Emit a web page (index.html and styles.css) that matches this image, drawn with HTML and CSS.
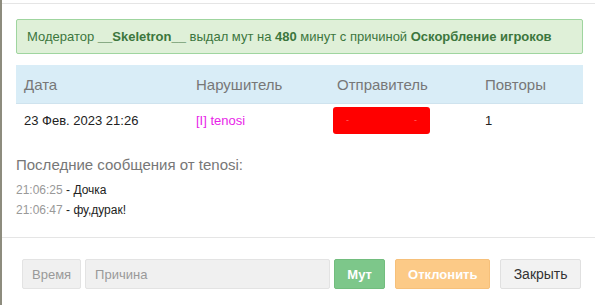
FILE: index.html
```html
<!DOCTYPE html>
<html lang="ru">
<head>
    <meta charset="UTF-8">
    <title>Мут</title>
    <link rel="stylesheet" href="styles.css">
</head>
<body>
    <div class="modal">
        <div class="modal-header"></div>
        <div class="modal-body">
            <div class="alert">
                Модератор <b>__Skeletron__</b> выдал мут на <b>480</b> минут с причиной <b>Оскорбление игроков</b>
            </div>

            <table class="report-table">
                <thead>
                    <tr>
                        <th class="col-date">Дата</th>
                        <th class="col-user">Нарушитель</th>
                        <th class="col-sender">Отправитель</th>
                        <th class="col-count">Повторы</th>
                    </tr>
                </thead>
                <tbody>
                    <tr>
                        <td>23 Фев. 2023 21:26</td>
                        <td><span class="nick">[I] tenosi</span></td>
                        <td><span class="hidden-name">-<span class="dash">-</span></span></td>
                        <td>1</td>
                    </tr>
                </tbody>
            </table>

            <h4 class="messages-title">Последние сообщения от tenosi:</h4>
            <div class="messages">
                <div class="message"><span class="time">21:06:25</span> - Дочка</div>
                <div class="message"><span class="time">21:06:47</span> - фу,дурак!</div>
            </div>
        </div>
        <div class="modal-footer">
            <span class="time-box">Время</span>
            <input type="text" class="reason-input" placeholder="Причина">
            <button class="btn btn-mute">Мут</button>
            <button class="btn btn-reject">Отклонить</button>
            <button class="btn btn-close">Закрыть</button>
        </div>
    </div>
</body>
</html>
```

FILE: styles.css
```css
body {
    font-family: "Liberation Sans", Arial, sans-serif;
    margin: 0;
    background: #8d8c7e;
    color: #333;
}

.modal {
    margin-left: 2px;
    height: 305px;
    background: white;
}

.modal-header {
    height: 3px;
    border-bottom: 1px solid #e5e5e5;
}

.modal-body {
    padding: 15px 12px 0 14px;
    height: 218px;
    border-bottom: 1px solid #e5e5e5;
}

.alert {
    background: #dff0d8;
    border: 1px solid #9fd59f;
    border-radius: 2px;
    color: #3c763d;
    font-size: 13px;
    padding: 9px 10px;
    line-height: 15px;
}

.report-table {
    width: 567px;
    margin-top: 11px;
    border-collapse: collapse;
}

.report-table th {
    background: #d9edf7;
    color: #777;
    font-weight: normal;
    font-size: 15px;
    text-align: left;
    height: 38px;
    padding: 0 8px;
    border-bottom: 1px solid #cfe3ee;
}

.report-table td {
    font-size: 13px;
    height: 32px;
    padding: 0 8px;
    color: #222;
}

.col-date { width: 156px; }
.col-user { width: 125px; }
.col-sender { width: 132px; }

.nick {
    color: #e81ee8;
}

.hidden-name {
    display: inline-block;
    margin-left: -4px;
    width: 97px;
    height: 27px;
    line-height: 27px;
    background: #ff0000;
    border-radius: 3px;
    color: #ff6a6a;
    font-size: 9px;
    padding-left: 13px;
    box-sizing: border-box;
    vertical-align: middle;
}

.dash {
    margin-left: 65px;
}

.messages-title {
    font-size: 15px;
    font-weight: normal;
    color: #777;
    margin: 20px 0 6px;
    line-height: 18px;
}

.message {
    font-size: 12px;
    line-height: 20px;
    color: #222;
}

.time {
    color: #999;
}

.modal-footer {
    display: flex;
    align-items: center;
    padding: 21px 0 0 20px;
}

.time-box, .reason-input, .btn {
    font-family: "Liberation Sans", Arial, sans-serif;
    font-size: 13px;
    height: 30px;
    box-sizing: border-box;
    border-radius: 2px;
}

.time-box {
    display: flex;
    align-items: center;
    padding: 0 9px;
    background: #f0f0f0;
    border: 1px solid #e3e3e3;
    color: #999;
}

.reason-input {
    width: 245px;
    margin-left: 4px;
    padding: 0 9px;
    background: #f0f0f0;
    border: 1px solid #e3e3e3;
    color: #999;
}

.reason-input::placeholder {
    color: #999;
}

.btn {
    border: 1px solid transparent;
    padding: 0 12px;
    cursor: pointer;
}

.btn-mute {
    margin-left: 4px;
    width: 51px;
    background: #7dc78a;
    border-color: #72bd7e;
    color: white;
    font-weight: bold;
}

.btn-reject {
    margin-left: 10px;
    width: 95px;
    background: #fcca87;
    border-color: #f6c07a;
    color: white;
    font-weight: bold;
}

.btn-close {
    margin-left: 10px;
    width: 81px;
    background: #f2f2f2;
    border-color: #e0e0e0;
    color: #333;
    font-size: 14px;
}
```
